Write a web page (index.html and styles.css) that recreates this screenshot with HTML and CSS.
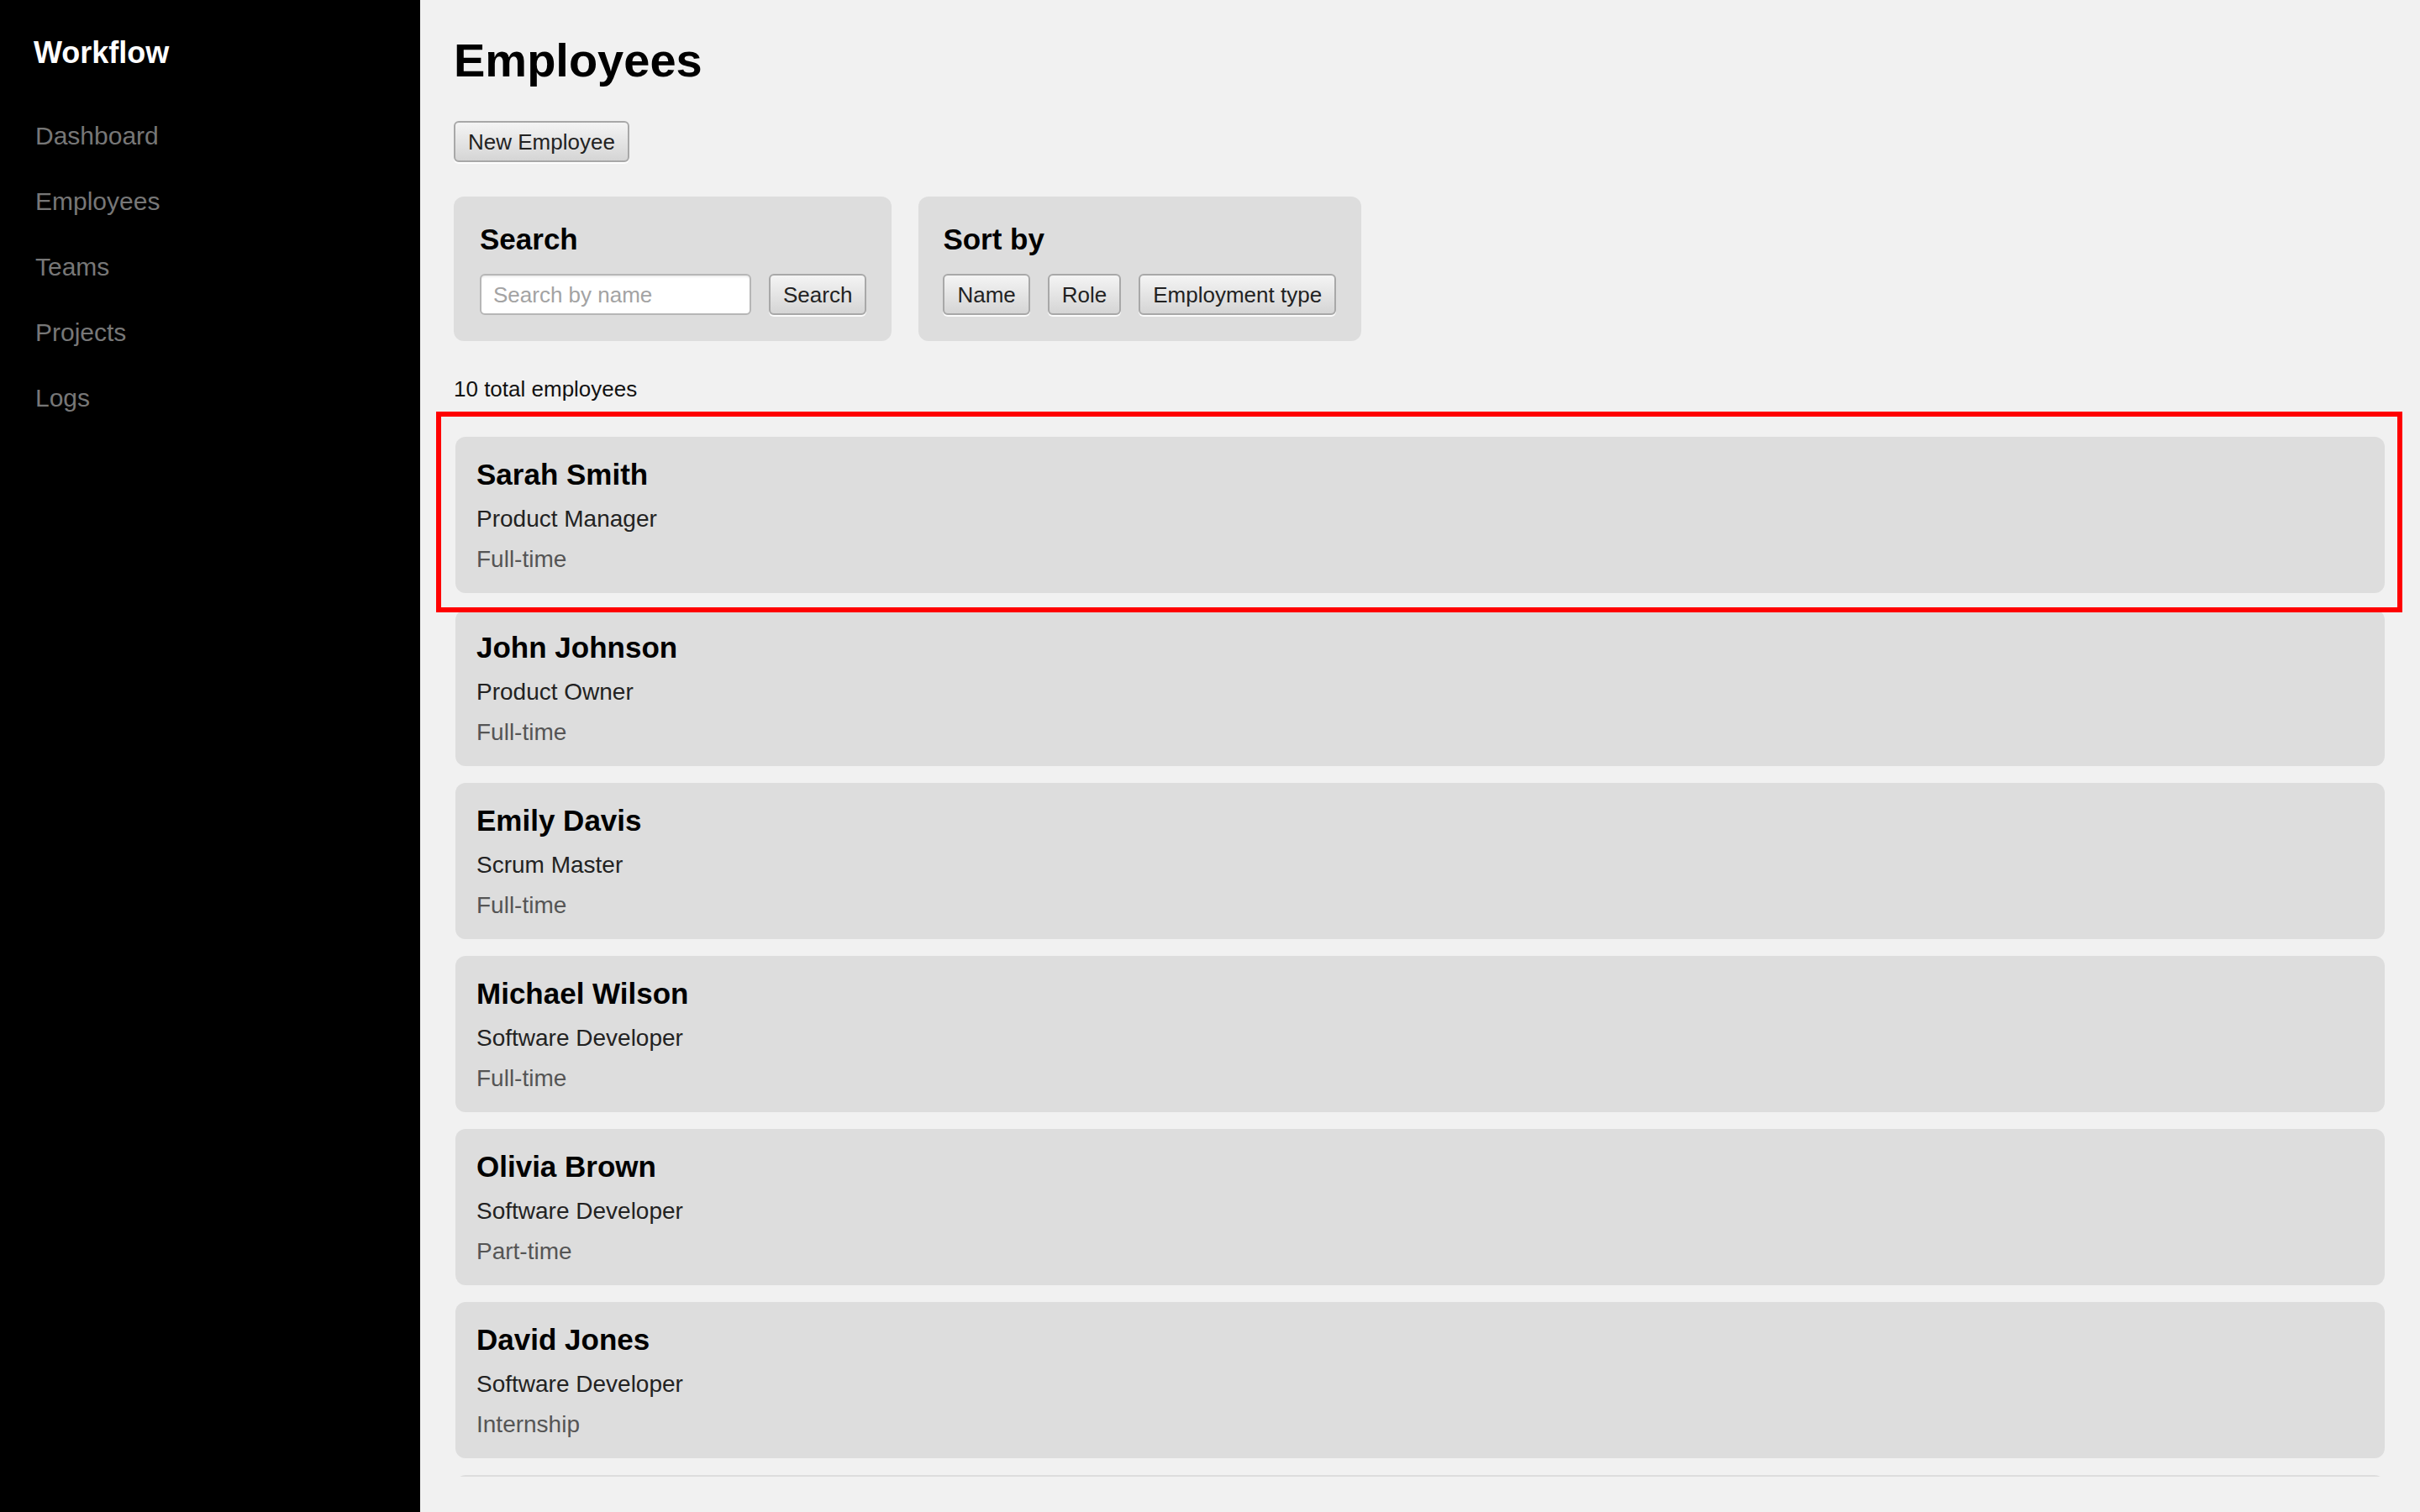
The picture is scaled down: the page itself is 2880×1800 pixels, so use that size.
FILE: index.html
```html
<!DOCTYPE html>
<html lang="en">
<head>
<meta charset="utf-8">
<title>Employees - Workflow</title>
<link rel="stylesheet" href="styles.css">
</head>
<body>
<aside class="sidebar">
  <div class="logo">Workflow</div>
  <nav class="nav">
    <a class="nav-link" href="#">Dashboard</a>
    <a class="nav-link" href="#">Employees</a>
    <a class="nav-link" href="#">Teams</a>
    <a class="nav-link" href="#">Projects</a>
    <a class="nav-link" href="#">Logs</a>
  </nav>
</aside>
<main class="main">
  <h1 class="title">Employees</h1>
  <div class="actions"><button class="btn">New Employee</button></div>
  <div class="panels">
    <section class="panel">
      <h3 class="panel-title">Search</h3>
      <div class="panel-row">
        <input class="search-input" type="text" placeholder="Search by name">
        <button class="btn">Search</button>
      </div>
    </section>
    <section class="panel panel-sort">
      <h3 class="panel-title">Sort by</h3>
      <div class="panel-row">
        <button class="btn">Name</button>
        <button class="btn">Role</button>
        <button class="btn">Employment type</button>
      </div>
    </section>
  </div>
  <p class="count">10 total employees</p>
  <div class="list">
    <div class="card"><h3 class="card-name">Sarah Smith</h3><p class="card-role">Product Manager</p><p class="card-type">Full-time</p></div>
    <div class="card"><h3 class="card-name">John Johnson</h3><p class="card-role">Product Owner</p><p class="card-type">Full-time</p></div>
    <div class="card"><h3 class="card-name">Emily Davis</h3><p class="card-role">Scrum Master</p><p class="card-type">Full-time</p></div>
    <div class="card"><h3 class="card-name">Michael Wilson</h3><p class="card-role">Software Developer</p><p class="card-type">Full-time</p></div>
    <div class="card"><h3 class="card-name">Olivia Brown</h3><p class="card-role">Software Developer</p><p class="card-type">Part-time</p></div>
    <div class="card"><h3 class="card-name">David Jones</h3><p class="card-role">Software Developer</p><p class="card-type">Internship</p></div>
    <div class="card"><h3 class="card-name">Sophia Miller</h3><p class="card-role">UX Designer</p><p class="card-type">Full-time</p></div>
    <div class="card"><h3 class="card-name">James Taylor</h3><p class="card-role">QA Engineer</p><p class="card-type">Full-time</p></div>
    <div class="card"><h3 class="card-name">Emma Anderson</h3><p class="card-role">Software Developer</p><p class="card-type">Contract</p></div>
    <div class="card"><h3 class="card-name">Daniel Thomas</h3><p class="card-role">DevOps Engineer</p><p class="card-type">Full-time</p></div>
  </div>
  <div class="highlight"></div>
</main>
</body>
</html>
```
FILE: styles.css
```css
* { box-sizing: border-box; }

html, body {
  margin: 0;
  padding: 0;
  height: 100%;
}

body {
  display: flex;
  font-family: "Liberation Sans", Arial, sans-serif;
  background: #f1f1f1;
  color: #111;
  overflow: hidden;
}

.sidebar {
  width: 500px;
  flex-shrink: 0;
  height: 100vh;
  background: #000;
  padding: 42px 40px;
}

.logo {
  color: #fff;
  font-weight: bold;
  font-size: 36px;
  line-height: 41px;
  margin-bottom: 62px;
}

.nav {
  display: flex;
  flex-direction: column;
  gap: 44px;
  padding-left: 2px;
}

.nav-link {
  color: #777;
  text-decoration: none;
  font-size: 30px;
  line-height: 34px;
}

.main {
  position: relative;
  flex: 1;
  height: 100vh;
  display: flex;
  flex-direction: column;
  padding: 40px 40px 42px 40px;
  min-width: 0;
}

.title {
  margin: 0 0 40px;
  font-size: 56px;
  line-height: 64px;
  font-weight: bold;
  color: #000;
}

.actions { display: flex; }

.btn {
  font-family: "Liberation Sans", Arial, sans-serif;
  font-size: 26px;
  line-height: 31px;
  height: 49px;
  padding: 8px 15px 6px;
  color: #222;
  background: linear-gradient(#f4f4f4, #d5d5d5);
  border: 2px solid #a8a8a8;
  border-radius: 6px;
  box-shadow: 0 2px 0 rgba(255, 255, 255, 0.9);
}

.panels {
  display: flex;
  gap: 32px;
  margin-top: 41px;
}

.panel {
  background: #ddd;
  border-radius: 12px;
  padding: 31px 30px 31px 31px;
}

.panel-sort {
  padding-left: 29px;
  padding-right: 30px;
}

.panel-title {
  margin: 0 0 21px;
  font-size: 35px;
  line-height: 40px;
  font-weight: bold;
  color: #000;
}

.panel-row {
  display: flex;
  gap: 21px;
}

.search-input {
  width: 323px;
  height: 49px;
  font-family: "Liberation Sans", Arial, sans-serif;
  font-size: 26px;
  padding: 2px 14px 0;
  border: 2px solid #b6b6b6;
  border-radius: 6px;
  background: #fff;
  box-shadow: inset 0 3px 3px -2px rgba(0, 0, 0, 0.12);
  color: #222;
}

.search-input::placeholder { color: #a3a3a3; }

.count {
  margin: 42px 0 42px;
  font-size: 26px;
  line-height: 30px;
  color: #111;
}

.list {
  flex: 1;
  min-height: 0;
  overflow: hidden;
  display: flex;
  flex-direction: column;
  gap: 20px;
  padding: 0 2px;
}

.card {
  flex-shrink: 0;
  background: #ddd;
  border-radius: 12px;
  padding: 25px 25px 24px;
}

.card-name {
  margin: 0 0 17px;
  font-size: 35px;
  line-height: 40px;
  font-weight: bold;
  color: #000;
}

.card-role {
  margin: 0 0 16px;
  font-size: 28px;
  line-height: 32px;
  color: #222;
}

.card-type {
  margin: 0;
  font-size: 28px;
  line-height: 32px;
  color: #555;
}

.highlight {
  position: absolute;
  left: 19px;
  top: 490px;
  width: 2340px;
  height: 239px;
  border: 6px solid #ff0000;
  pointer-events: none;
}
```
